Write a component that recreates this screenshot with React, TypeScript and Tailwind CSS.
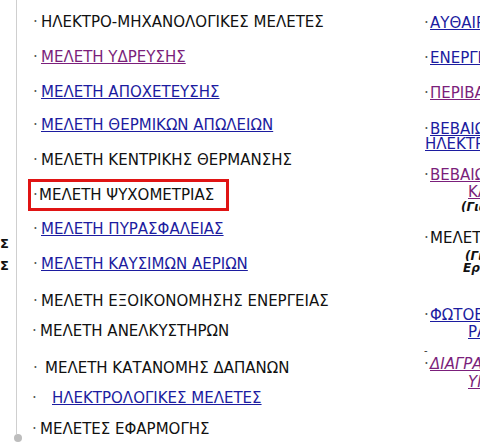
const font = { fontFamily: '"DejaVu Sans", Verdana, sans-serif' }

type Row = {
  text: string
  kind: 'plain' | 'link' | 'visited'
  mt: string
  pad: string
  boxed?: boolean
}

const rows: Row[] = [
  { text: 'ΗΛΕΚΤΡΟ-ΜΗΧΑΝΟΛΟΓΙΚΕΣ ΜΕΛΕΤΕΣ', kind: 'plain', mt: 'mt-[14px]', pad: 'pl-[11px]' },
  { text: 'ΜΕΛΕΤΗ ΥΔΡΕΥΣΗΣ', kind: 'visited', mt: 'mt-[19px]', pad: 'pl-[11px]' },
  { text: 'ΜΕΛΕΤΗ ΑΠΟΧΕΤΕΥΣΗΣ', kind: 'link', mt: 'mt-[19px]', pad: 'pl-[11px]' },
  { text: 'ΜΕΛΕΤΗ ΘΕΡΜΙΚΩΝ ΑΠΩΛΕΙΩΝ', kind: 'link', mt: 'mt-[17px]', pad: 'pl-[11px]' },
  { text: 'ΜΕΛΕΤΗ ΚΕΝΤΡΙΚΗΣ ΘΕΡΜΑΝΣΗΣ', kind: 'plain', mt: 'mt-[19px]', pad: 'pl-[11px]' },
  { text: 'ΜΕΛΕΤΗ ΨΥΧΟΜΕΤΡΙΑΣ', kind: 'plain', mt: 'mt-[19px]', pad: 'pl-[11px]', boxed: true },
  { text: 'ΜΕΛΕΤΗ ΠΥΡΑΣΦΑΛΕΙΑΣ', kind: 'link', mt: 'mt-[18px]', pad: 'pl-[11px]' },
  { text: 'ΜΕΛΕΤΗ ΚΑΥΣΙΜΩΝ ΑΕΡΙΩΝ', kind: 'link', mt: 'mt-[19px]', pad: 'pl-[11px]' },
  { text: 'ΜΕΛΕΤΗ ΕΞΟΙΚΟΝΟΜΗΣΗΣ ΕΝΕΡΓΕΙΑΣ', kind: 'plain', mt: 'mt-[21px]', pad: 'pl-[11px]' },
  { text: 'ΜΕΛΕΤΗ ΑΝΕΛΚΥΣΤΗΡΩΝ', kind: 'plain', mt: 'mt-[14px]', pad: 'pl-[10px]' },
  { text: 'ΜΕΛΕΤΗ ΚΑΤΑΝΟΜΗΣ ΔΑΠΑΝΩΝ', kind: 'plain', mt: 'mt-[21px]', pad: 'pl-[11px] [&>span+span]:ml-[4px]' },
  { text: 'ΗΛΕΚΤΡΟΛΟΓΙΚΕΣ ΜΕΛΕΤΕΣ', kind: 'link', mt: 'mt-[14px]', pad: 'pl-[10px] [&>span+span]:ml-[12px]' },
  { text: 'ΜΕΛΕΤΕΣ ΕΦΑΡΜΟΓΗΣ', kind: 'plain', mt: 'mt-[15px]', pad: 'pl-[10px]' },
]

const color = {
  plain: 'text-[#111111]',
  link: 'text-[#1c1ca0] underline',
  visited: 'text-[#7b1f7b] underline',
}

type Line = {
  text: string
  cls: string
  mt: string
  dot?: boolean
  pad?: string
}

// right column, clipped at the window edge
const lines: Line[] = [
  { text: 'ΑΥΘΑΙΡΕΤΑ', cls: color.link, mt: 'mt-[15px]', dot: true },
  { text: 'ΕΝΕΡΓΕΙΑΚΗ ΕΠΙΘΕΩΡΗΣΗ', cls: color.link, mt: 'mt-[19px]', dot: true },
  { text: 'ΠΕΡΙΒΑΛΛΟΝΤΙΚΕΣ ΜΕΛΕΤΕΣ', cls: color.visited, mt: 'mt-[19px]', dot: true },
  { text: 'ΒΕΒΑΙΩΣΗ ΕΛΕΓΧΟΥ', cls: color.link, mt: 'mt-[20px]', dot: true },
  { text: 'ΗΛΕΚΤΡΟΛΟΓΟΥ', cls: color.link, mt: '-mt-[1px]', pad: 'pl-[1px]' },
  { text: 'ΒΕΒΑΙΩΣΗ ΣΤΑΤΙΚΗΣ', cls: color.visited, mt: 'mt-[15px]', dot: true },
  { text: 'ΚΑΤΑΛΛΗΛΟΤΗΤΑΣ', cls: color.visited, mt: 'mt-[1px]', pad: 'pl-[44px]' },
  { text: '(Για νομιμοποιήσεις)', cls: 'text-[#111111] italic font-bold text-[12px]', mt: '-mt-[1px]', pad: 'pl-[37px]' },
  { text: 'ΜΕΛΕΤΗ ΕΝΕΡΓΕΙΑΚΗΣ', cls: color.plain, mt: 'mt-[15px]', dot: true },
  { text: '(Για την ένταξη', cls: 'text-[#111111] italic font-bold text-[12px]', mt: 'mt-[2px]', pad: 'pl-[41px]' },
  { text: 'Εργασιών)', cls: 'text-[#111111] italic font-bold text-[12px]', mt: '-mt-[4px]', pad: 'pl-[39px]' },
  { text: 'ΦΩΤΟΒΟΛΤΑΪΚΑ', cls: color.link, mt: 'mt-[31px]', dot: true },
  { text: 'ΡΑΝΤΕΒΟΥ', cls: color.link, mt: 'mt-[1px]', pad: 'pl-[44px]' },
  { text: '-', cls: 'text-[#333333] text-[10px]', mt: 'mt-[3px]', pad: 'pl-[0px]' },
  { text: 'ΔΙΑΓΡΑΜΜΑ ΡΟΗΣ', cls: 'text-[#7b1f7b] underline italic', mt: '-mt-[3px]', dot: true },
  { text: 'ΥΠΟΘΕΣΕΩΝ', cls: 'text-[#7b1f7b] underline italic', mt: 'mt-[2px]', pad: 'pl-[44px]' },
]

export default function App() {
  return (
    <div style={font} className="flex w-[480px] h-[447px] overflow-hidden bg-white text-[15px]">
      {/* clipped column on the left */}
      <div className="w-[14px] shrink-0 flex flex-col text-[13px] font-bold text-[#111111] leading-[14px]">
        <div className="mt-[237px]">Σ</div>
        <div className="mt-[8px]">Σ</div>
      </div>

      {/* timeline */}
      <div className="w-[8px] shrink-0 flex flex-col">
        <div className="ml-[2px] w-px h-[434px] bg-[#cfcfcf]" />
        <div className="w-[8px] h-[8px] rounded-full bg-[#bdbdbd]" />
      </div>

      {/* main list */}
      <div className="w-[402px] shrink-0 flex flex-col overflow-hidden">
        {rows.map((r) => (
          <div key={r.text} className={`${r.mt} h-[16px] leading-[16px] flex items-center whitespace-nowrap ${r.pad}`}>
            {r.boxed ? (
              <div className="-ml-[5px] pl-[2px] flex items-center h-[32px] w-[201px] border-[3px] border-[#e01414]">
                <span className="w-[6px] text-[#555555]">·</span>
                <span className={color[r.kind]}>{r.text}</span>
              </div>
            ) : (
              <>
                <span className="w-[8px] shrink-0 text-[#555555]">·</span>
                <span className={color[r.kind]}>{r.text}</span>
              </>
            )}
          </div>
        ))}
      </div>

      {/* right column */}
      <div className="flex-1 flex flex-col overflow-hidden">
        {lines.map((l, i) => (
          <div key={i} className={`${l.mt} h-[16px] leading-[16px] flex items-center whitespace-nowrap ${l.pad ?? ''}`}>
            {l.dot && <span className="w-[6px] shrink-0 text-[#555555]">·</span>}
            <span className={l.cls}>{l.text}</span>
          </div>
        ))}
      </div>
    </div>
  )
}
